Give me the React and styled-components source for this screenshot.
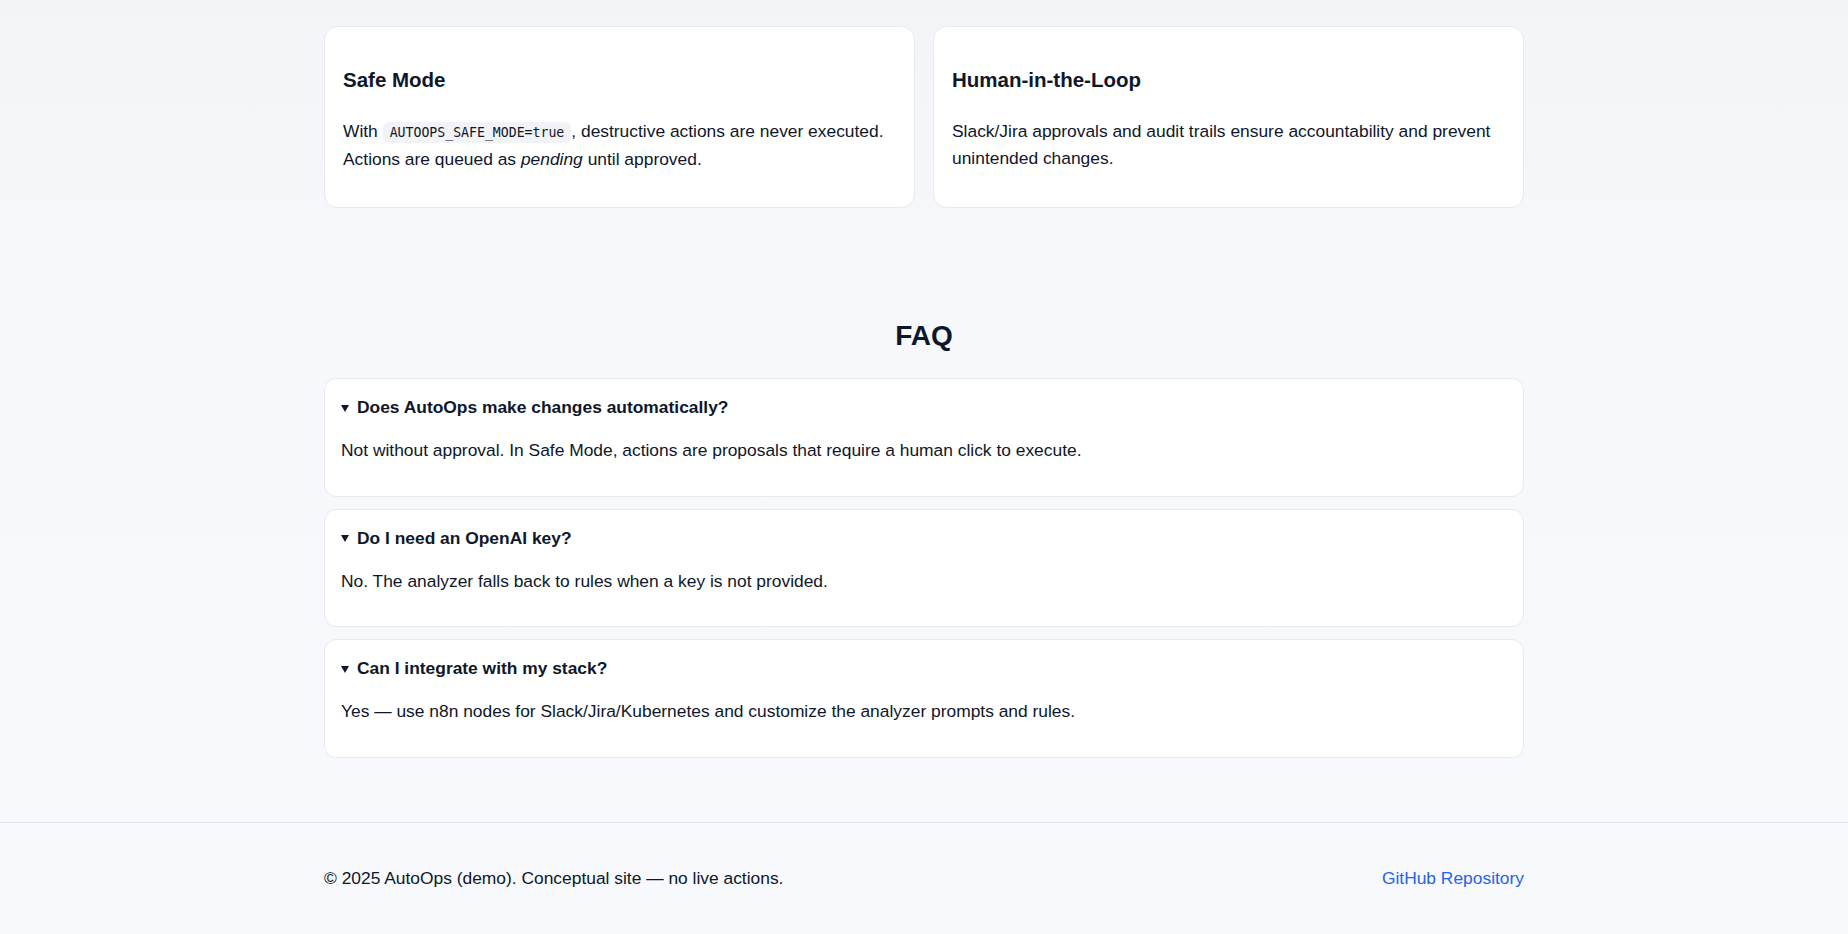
import React from "react";
import styled, { createGlobalStyle } from "styled-components";

const GlobalStyle = createGlobalStyle`
  html, body {
    margin: 0;
    padding: 0;
  }
  body {
    font-family: "Liberation Sans", Arial, sans-serif;
    font-size: 17.4px;
    line-height: 27px;
    color: #0f172a;
    background: linear-gradient(180deg, #f3f4f7 0px, #f7f8fb 260px, #f7f9fc 100%);
    min-height: 100vh;
  }
`;

const Page = styled.div`
  min-height: 100vh;
  display: flex;
  flex-direction: column;
`;

const Container = styled.div`
  width: 1200px;
  margin: 0 auto;
`;

const Section = styled.section`
  padding: ${(p) => p.$pad};
`;

const CardGrid = styled.div`
  display: grid;
  grid-template-columns: 1fr 1fr;
  gap: 18px;
`;

const Card = styled.div`
  background: #ffffff;
  border: 1px solid #e8eaef;
  border-radius: 14px;
  padding: 18px 18px;
`;

const CardTitle = styled.h3`
  margin: 19px 0 22px;
  font-size: 20.5px;
  line-height: 32px;
  font-weight: 700;
  color: #0f172a;
`;

const CardText = styled.p`
  margin: 0 0 16px;
  line-height: 27px;
`;

const Code = styled.code`
  font-family: "DejaVu Sans Mono", "Liberation Mono", monospace;
  font-size: 13.2px;
  background: #f1f3f6;
  border-radius: 6px;
  padding: 3px 7px;
`;

const SectionTitle = styled.h2`
  margin: 0 0 24px;
  text-align: center;
  font-size: 28px;
  line-height: 36px;
  font-weight: 700;
`;

const FaqList = styled.div`
  display: flex;
  flex-direction: column;
  gap: 12px;
`;

const FaqItem = styled.details`
  background: #ffffff;
  border: 1px solid #e8eaef;
  border-radius: 12px;
  padding: 15px 16px 15.5px;
`;

const Question = styled.summary`
  display: flex;
  align-items: center;
  font-weight: 700;
  line-height: 27px;
  cursor: pointer;
  list-style: none;

  &::-webkit-details-marker {
    display: none;
  }
`;

const Marker = styled.span`
  width: 0;
  height: 0;
  border-left: 4px solid transparent;
  border-right: 4px solid transparent;
  border-top: 7px solid #0f172a;
  margin: 1px 8px 0 0;
  flex: none;
`;

const Answer = styled.p`
  margin: 16px 0 16px;
  line-height: 27px;
`;

const Footer = styled.footer`
  border-top: 1px solid #e4e6eb;
  padding: 42px 0 41px;
`;

const FooterRow = styled.div`
  display: flex;
  justify-content: space-between;
  align-items: center;
  line-height: 27px;
`;

const FooterLink = styled.a`
  color: #2563eb;
  text-decoration: none;
`;

const faqs = [
  {
    q: "Does AutoOps make changes automatically?",
    a: "Not without approval. In Safe Mode, actions are proposals that require a human click to execute.",
  },
  {
    q: "Do I need an OpenAI key?",
    a: "No. The analyzer falls back to rules when a key is not provided.",
  },
  {
    q: "Can I integrate with my stack?",
    a: "Yes — use n8n nodes for Slack/Jira/Kubernetes and customize the analyzer prompts and rules.",
  },
];

export default function App() {
  return (
    <Page>
      <GlobalStyle />
      <Section $pad="26px 0 56px">
        <Container>
          <CardGrid>
            <Card>
              <CardTitle>Safe Mode</CardTitle>
              <CardText>
                With <Code>AUTOOPS_SAFE_MODE=true</Code>, destructive actions are never executed.
                Actions are queued as <em>pending</em> until approved.
              </CardText>
            </Card>
            <Card>
              <CardTitle>Human-in-the-Loop</CardTitle>
              <CardText>
                Slack/Jira approvals and audit trails ensure accountability and prevent unintended
                changes.
              </CardText>
            </Card>
          </CardGrid>
        </Container>
      </Section>
      <Section $pad="54px 0 64px">
        <Container>
          <SectionTitle>FAQ</SectionTitle>
          <FaqList>
            {faqs.map((f) => (
              <FaqItem key={f.q} open>
                <Question>
                  <Marker />
                  {f.q}
                </Question>
                <Answer>{f.a}</Answer>
              </FaqItem>
            ))}
          </FaqList>
        </Container>
      </Section>
      <Footer>
        <Container>
          <FooterRow>
            <span>© 2025 AutoOps (demo). Conceptual site — no live actions.</span>
            <FooterLink href="#">GitHub Repository</FooterLink>
          </FooterRow>
        </Container>
      </Footer>
    </Page>
  );
}
